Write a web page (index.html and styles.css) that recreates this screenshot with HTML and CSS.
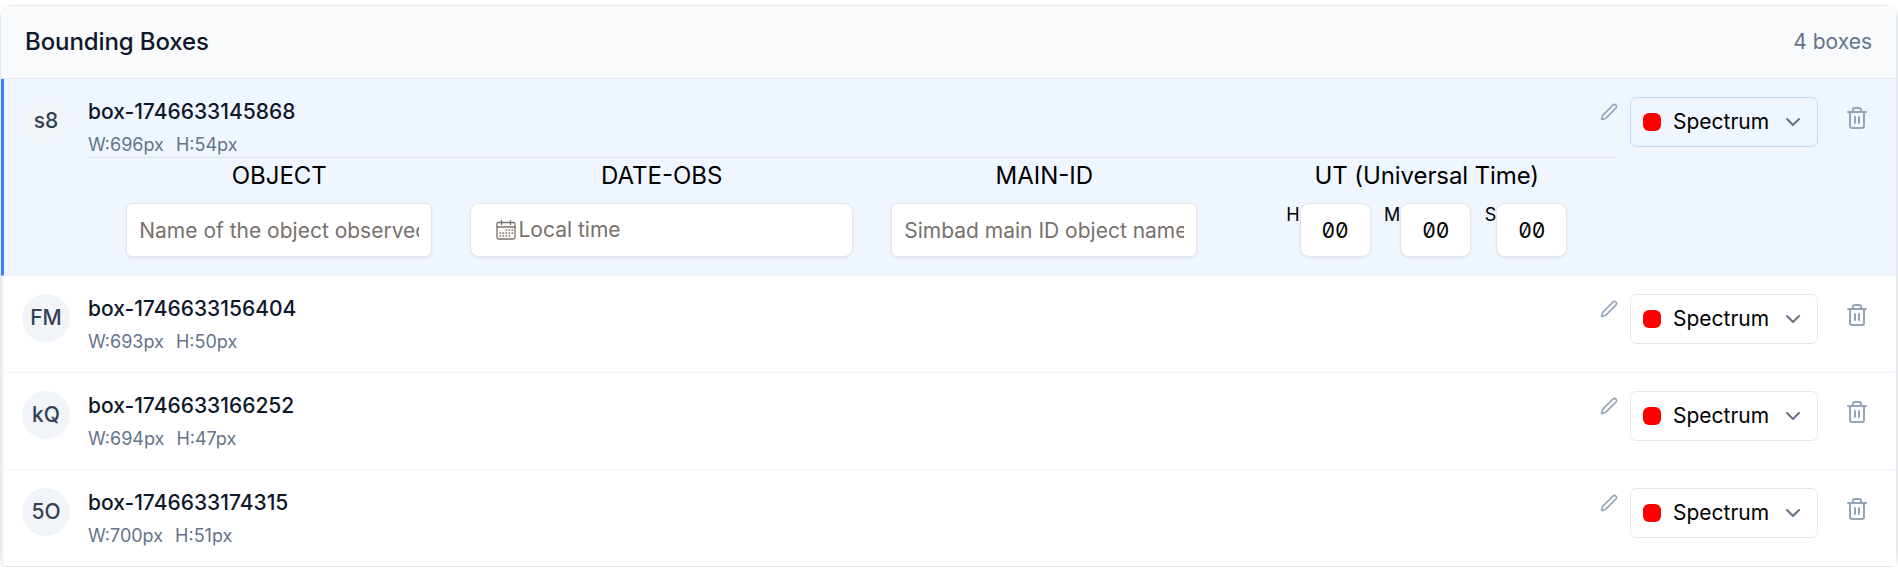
FILE: index.html
```html
<!DOCTYPE html>
<html lang="en">
<head>
<meta charset="utf-8">
<title>Bounding Boxes</title>
<link rel="stylesheet" href="styles.css">
</head>
<body>
<svg class="sprite" aria-hidden="true">
  <symbol id="pencil" viewBox="0 0 24 24"><path d="M21.17 6.81a1 1 0 0 0-3.99-3.99L3.84 16.17a2 2 0 0 0-.5.83l-1.32 4.35a.5.5 0 0 0 .62.62l4.35-1.32a2 2 0 0 0 .83-.5z"/></symbol>
  <symbol id="trash" viewBox="0 0 24 24"><path d="M3 6h18M19 6v14a2 2 0 0 1-2 2H7a2 2 0 0 1-2-2V6M8 6V4a2 2 0 0 1 2-2h4a2 2 0 0 1 2 2v2M10 11v6M14 11v6"/></symbol>
  <symbol id="chevron" viewBox="0 0 24 24"><path d="m6 9 6 6 6-6"/></symbol>
  <symbol id="calendar" viewBox="0 0 20 20"><rect x="1" y="2.5" width="18" height="16.5" rx="1.5"/><path d="M1 7h18M5.500 .5v4M14.500 .5v4"/><path class="days" d="M9.500 10h8M3.500 13h14M3.500 16h11"/></symbol>
</svg>
<main class="panel">
  <header class="panel-header"><h2>Bounding Boxes</h2><span>4 boxes</span></header>
  <section class="row active">
    <div class="avatar">s8</div>
    <div class="details">
      <div class="title"><span class="name">box-1746633145868</span><svg class="pencil"><use href="#pencil"/></svg></div>
      <div class="dims"><span>W:696px</span><span>H:54px</span></div>
      <div class="form">
        <div class="field"><label>OBJECT</label><input class="short" placeholder="Name of the object observed"></div>
        <div class="field"><label>DATE-OBS</label><div class="date"><svg class="calendar"><use href="#calendar"/></svg><span>Local time</span></div></div>
        <div class="field"><label>MAIN-ID</label><input class="short" placeholder="Simbad main ID object name"></div>
        <div class="field"><label class="tight">UT (Universal Time)</label>
          <div class="time">
            <div class="unit"><span>H</span><div class="digits">00</div></div>
            <div class="unit"><span>M</span><div class="digits">00</div></div>
            <div class="unit"><span>S</span><div class="digits">00</div></div>
          </div>
        </div>
      </div>
    </div>
    <div class="select"><i class="swatch"></i><span>Spectrum</span><svg class="chevron"><use href="#chevron"/></svg></div>
    <div class="delete"><svg class="trash"><use href="#trash"/></svg></div>
  </section>
  <section class="row">
    <div class="avatar">FM</div>
    <div class="details">
      <div class="title"><span class="name">box-1746633156404</span><svg class="pencil"><use href="#pencil"/></svg></div>
      <div class="dims"><span>W:693px</span><span>H:50px</span></div>
    </div>
    <div class="select"><i class="swatch"></i><span>Spectrum</span><svg class="chevron"><use href="#chevron"/></svg></div>
    <div class="delete"><svg class="trash"><use href="#trash"/></svg></div>
  </section>
  <section class="row">
    <div class="avatar">kQ</div>
    <div class="details">
      <div class="title"><span class="name">box-1746633166252</span><svg class="pencil"><use href="#pencil"/></svg></div>
      <div class="dims"><span>W:694px</span><span>H:47px</span></div>
    </div>
    <div class="select"><i class="swatch"></i><span>Spectrum</span><svg class="chevron"><use href="#chevron"/></svg></div>
    <div class="delete"><svg class="trash"><use href="#trash"/></svg></div>
  </section>
  <section class="row">
    <div class="avatar">5O</div>
    <div class="details">
      <div class="title"><span class="name">box-1746633174315</span><svg class="pencil"><use href="#pencil"/></svg></div>
      <div class="dims"><span>W:700px</span><span>H:51px</span></div>
    </div>
    <div class="select"><i class="swatch"></i><span>Spectrum</span><svg class="chevron"><use href="#chevron"/></svg></div>
    <div class="delete"><svg class="trash"><use href="#trash"/></svg></div>
  </section>
</main>
</body>
</html>
```
FILE: styles.css
```css
* { box-sizing: border-box; }
body { margin: 0; padding-top: 5px; background: #fff; color: #0c0a09; font: 21px/30px Inter, "Liberation Sans", sans-serif; overflow: hidden; }
.sprite { display: none; }
svg { fill: none; stroke: currentColor; stroke-linecap: round; stroke-linejoin: round; stroke-width: 2; flex: none; }
.panel { width: 1897px; border: 1px solid #e2e8f0; border-radius: 12px; box-shadow: 0 1.5px 3px rgba(0, 0, 0, .12), 0 1px 2px rgba(0, 0, 0, .08); }
.panel-header { display: flex; align-items: center; justify-content: space-between; height: 73px; padding: 0 24px; background: #f8fafc; border-bottom: 1px solid #e2e8f0; }
.panel-header h2 { margin: 0; font-size: 24px; line-height: 36px; font-weight: 500; letter-spacing: -.1px; color: #0f172a; }
.panel-header span { color: #64748b; }
.row { display: flex; align-items: flex-start; padding: 18px; border-bottom: 1px solid #f1f5f9; border-left: 3px solid #f1f5f9; background: #fff; }
.row:last-child { border-bottom: 0; }
.row.active { background: #eff6ff; border-left-color: #3b82f6; border-bottom-color: #eff6ff; }
.avatar { width: 48px; height: 48px; margin-right: 18px; flex: none; border-radius: 50%; background: #f1f5f9; color: #334155; font-weight: 500; line-height: 48px; text-align: center; }
.details { flex: 1; min-width: 0; margin-right: 12px; }
.title { display: flex; align-items: center; justify-content: space-between; height: 30px; }
.name { font-weight: 500; color: #0f172a; }
.pencil { width: 18px; height: 18px; color: #94a3b8; }
.dims { display: flex; gap: 12px; margin-top: 6px; font-size: 18px; line-height: 24px; color: #64748b; }
.form { display: grid; grid-template-columns: repeat(4, 1fr); border-top: 1px solid #e2e2e8; }
.field { display: flex; flex-direction: column; align-items: center; gap: 9px; min-width: 0; }
.field label { font-size: 24px; line-height: 36px; color: #000; }
.field .tight { letter-spacing: -.1px; }
input, .date, .digits { height: 54px; border: 1px solid #e7e5e4; background: #fff; box-shadow: 0 1px 3px rgba(0, 0, 0, .07); }
.short { width: 80%; padding: 1px 12px 0; border-radius: 6px; font: inherit; outline: 0; }
.short::placeholder { color: #78716c; opacity: 1; }
.date { display: flex; align-items: center; align-self: flex-start; width: 383px; margin-left: -.5px; padding-left: 25px; border-radius: 9px; color: #78716c; }
.calendar { width: 20px; height: 20px; margin-right: 2.500px; stroke-width: 1.3; }
.days { stroke-dasharray: 1.6 1.4; stroke-linecap: butt; stroke-width: 1.5; }
.time { display: flex; justify-content: center; gap: 13.500px; }
.unit { display: flex; align-items: flex-start; font-size: 18px; line-height: 24px; color: #000; }
.digits { width: 71px; border-radius: 9px; font-size: 21px; line-height: 53px; text-align: center; font-feature-settings: "zero", "tnum"; }
.select { display: flex; align-items: center; width: 188px; height: 50px; padding: 0 12px; border: 1px solid #e2e8f0; border-radius: 6px; color: #000; }
.active .select { border-color: #bfdbfe; }
.swatch { width: 18px; height: 18px; margin-right: 12px; border-radius: 6px; background: #f00; }
.chevron { width: 24px; height: 24px; margin-left: auto; color: #64748b; }
.delete { display: flex; align-items: center; justify-content: center; width: 42px; height: 42px; margin-left: 18px; color: #94a3b8; }
.trash { width: 24px; height: 24px; }
```
